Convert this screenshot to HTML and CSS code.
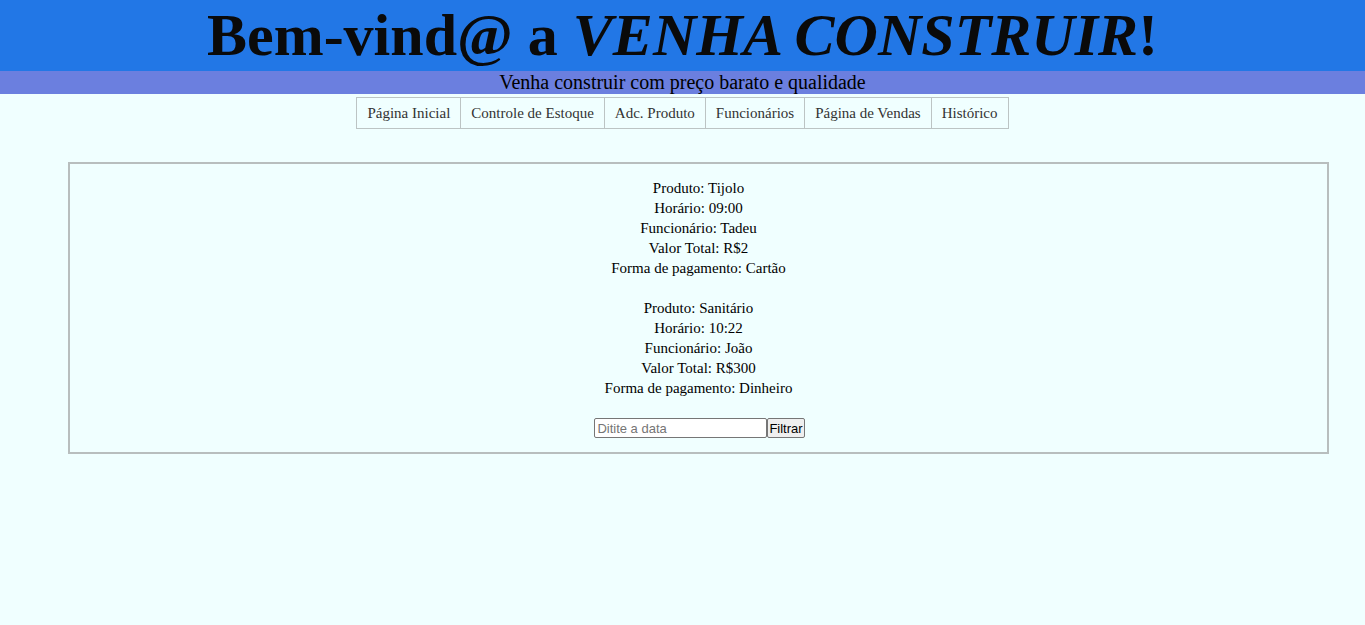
FILE: index.html
```html
<!DOCTYPE html>
<html lang="pt-BR">
<head>
<meta charset="utf-8">
<title>Venha Construir - Histórico</title>
<link rel="stylesheet" href="styles.css">
</head>
<body>
<header class="top">
  <h1 class="title">Bem-vind@ a <em>VENHA CONSTRUIR</em>!</h1>
</header>
<div class="tagline">Venha construir com preço barato e qualidade</div>
<nav class="menu">
  <a class="menu-item" href="#">Página Inicial</a>
  <a class="menu-item" href="#">Controle de Estoque</a>
  <a class="menu-item" href="#">Adc. Produto</a>
  <a class="menu-item" href="#">Funcionários</a>
  <a class="menu-item" href="#">Página de Vendas</a>
  <a class="menu-item" href="#">Histórico</a>
</nav>
<main class="panel">
  <p class="sale">Produto: Tijolo<br>Horário: 09:00<br>Funcionário: Tadeu<br>Valor Total: R$2<br>Forma de pagamento: Cartão</p>
  <p class="sale">Produto: Sanitário<br>Horário: 10:22<br>Funcionário: João<br>Valor Total: R$300<br>Forma de pagamento: Dinheiro</p>
  <form class="filter">
    <input class="filter-input" type="text" placeholder="Ditite a data"><button class="filter-btn" type="button">Filtrar</button>
  </form>
</main>
</body>
</html>
```
FILE: styles.css
```css
html, body {
  margin: 0;
  padding: 0;
}
body {
  background: #f0ffff;
  font-family: "Liberation Serif", "Times New Roman", serif;
  color: #000;
}
.top {
  background: #2277e6;
  height: 71px;
  overflow: hidden;
}
.title {
  margin: 0;
  text-align: center;
  font-size: 60px;
  line-height: 71px;
  font-weight: bold;
  color: #0a0a0a;
}
.title em {
  font-style: italic;
}
.tagline {
  background: #6b7fdf;
  height: 23px;
  line-height: 23px;
  text-align: center;
  font-size: 20px;
}
.menu {
  display: flex;
  justify-content: center;
  margin-top: 3px;
}
.menu-item {
  display: block;
  border: 1px solid #bcc4c4;
  border-left-width: 0;
  padding: 0 10px;
  height: 30px;
  line-height: 30px;
  font-size: 15px;
  color: #333;
  text-decoration: none;
}
.menu-item:first-child {
  border-left-width: 1px;
}
.panel {
  margin: 33px 36px 0 68px;
  border: 2px solid #b8bebe;
  padding: 14px 0;
  text-align: center;
  font-size: 15px;
  line-height: 20px;
}
.sale {
  margin: 0 0 20px;
}
.filter {
  margin: 0;
  display: flex;
  justify-content: center;
  padding-left: 2px;
}
.filter-input {
  box-sizing: border-box;
  width: 173px;
  height: 20px;
  margin: 0;
  padding: 1px 2px;
  border: 1px solid #767676;
  border-radius: 2px;
  background: #fff;
  font-family: "Liberation Sans", Arial, sans-serif;
  font-size: 13px;
}
.filter-input::placeholder {
  color: #757575;
}
.filter-btn {
  box-sizing: border-box;
  height: 20px;
  margin: 0;
  padding: 0 1px;
  border: 1px solid #767676;
  border-radius: 2px;
  background: #efefef;
  font-family: "Liberation Sans", Arial, sans-serif;
  font-size: 13px;
  color: #000;
}
```
